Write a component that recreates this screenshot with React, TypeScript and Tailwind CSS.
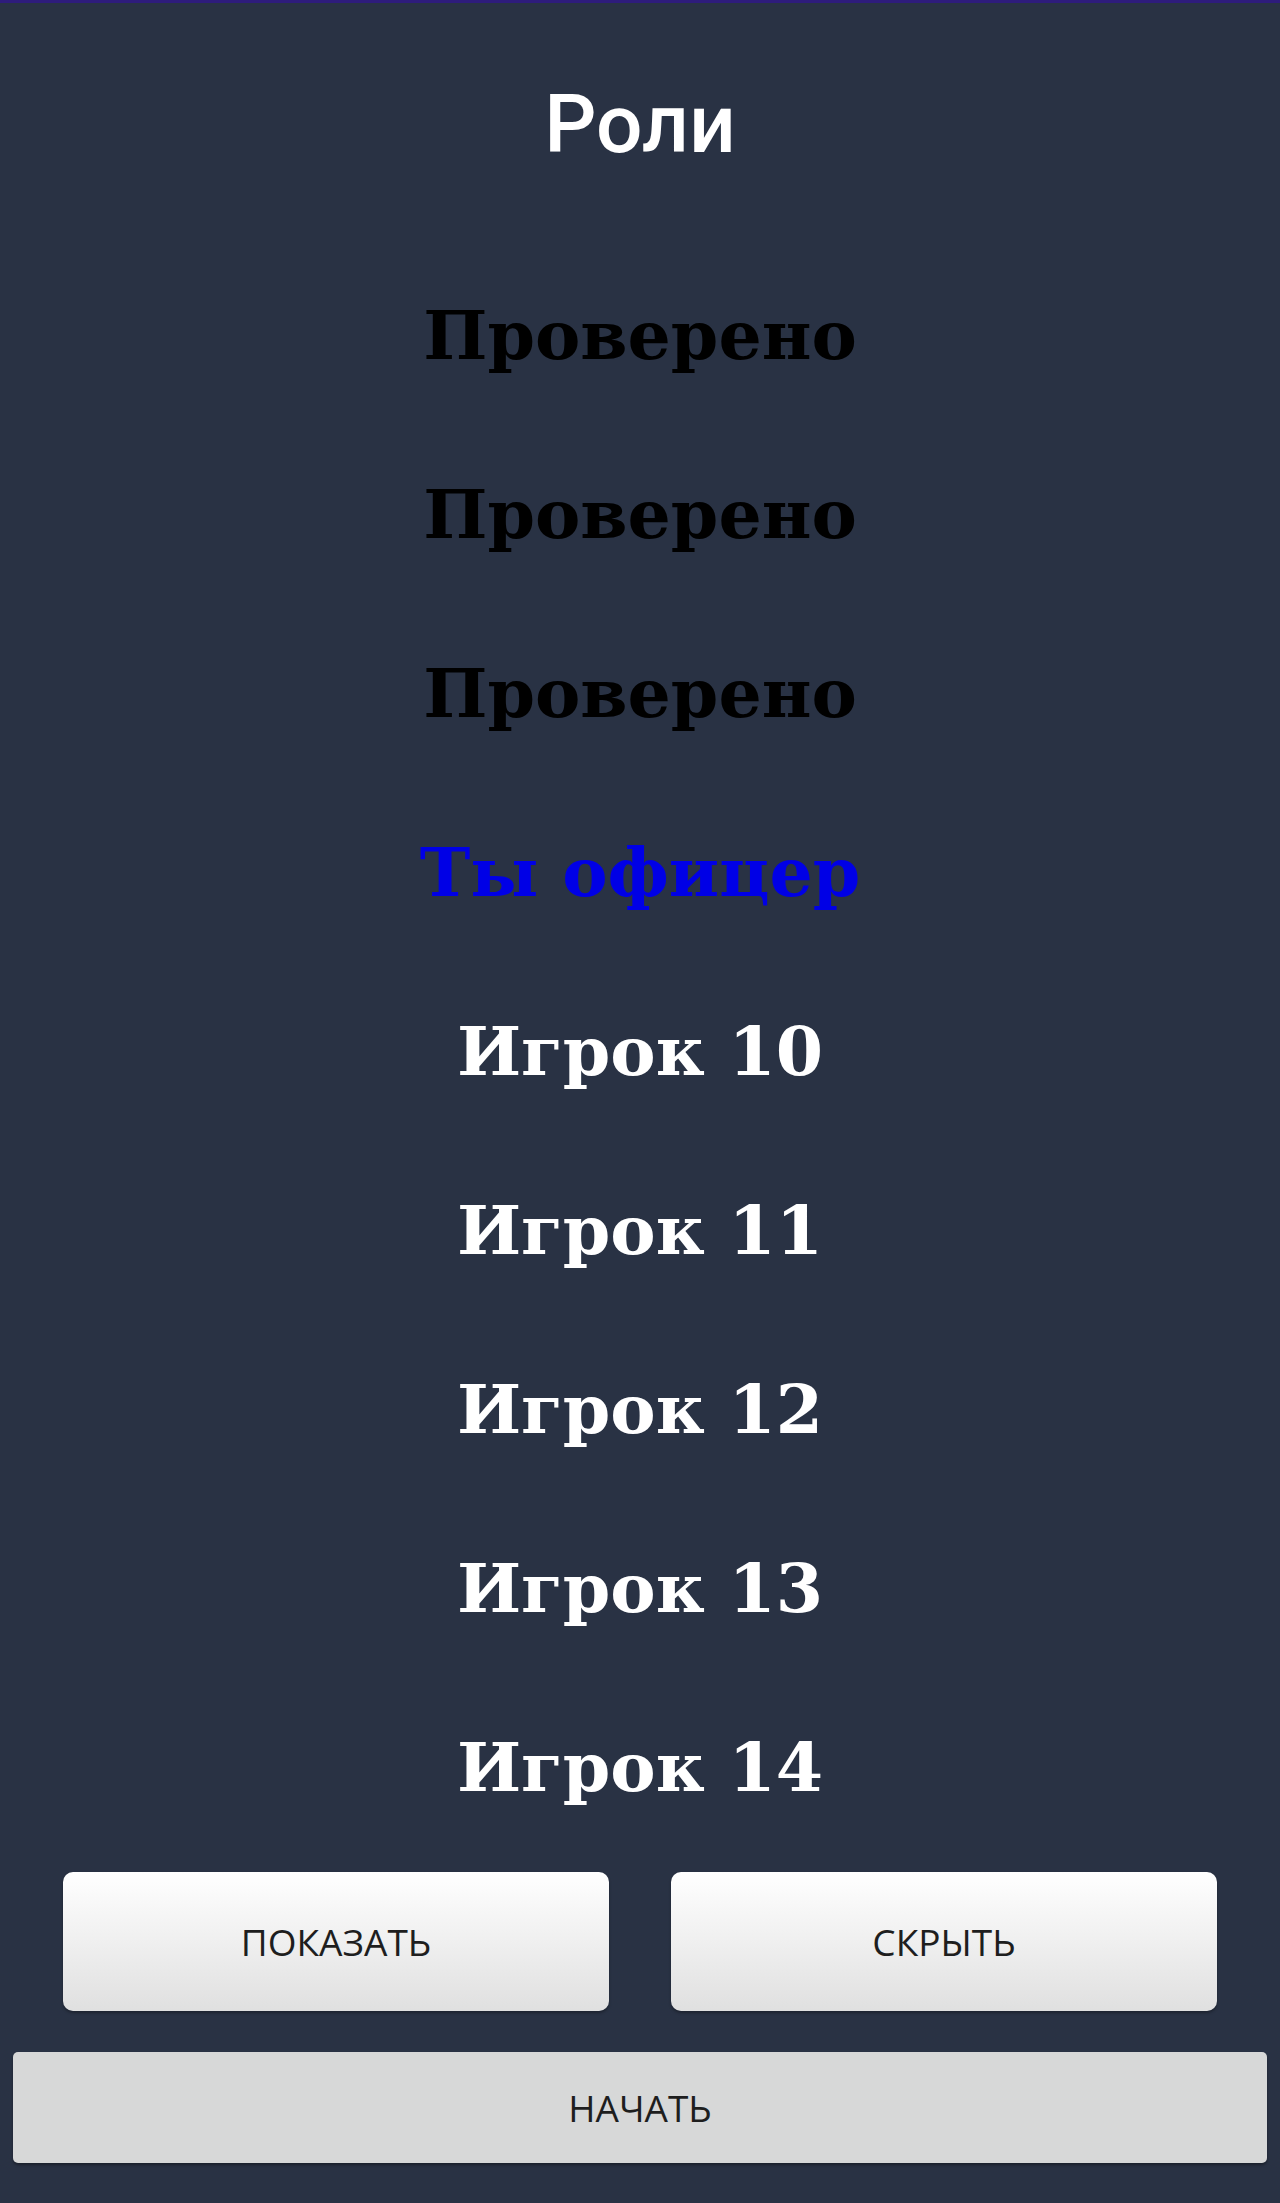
import React from 'react';

const rows: { label: string; tone: 'checked' | 'me' | 'player' }[] = [
  { label: 'Проверено', tone: 'checked' },
  { label: 'Проверено', tone: 'checked' },
  { label: 'Проверено', tone: 'checked' },
  { label: 'Ты офицер', tone: 'me' },
  { label: 'Игрок 10', tone: 'player' },
  { label: 'Игрок 11', tone: 'player' },
  { label: 'Игрок 12', tone: 'player' },
  { label: 'Игрок 13', tone: 'player' },
  { label: 'Игрок 14', tone: 'player' },
];

const toneClass = {
  checked: 'text-black',
  me: 'text-[#0000e6]',
  player: 'text-white',
};

export default function App() {
  return (
    <div className="flex min-h-[2203px] w-full flex-col border-t-[3px] border-[#2e1c7c] bg-[#293244]">
      {/* Title */}
      <h1 className="pt-[60px] text-center font-['Roboto',sans-serif] text-[82px] font-medium text-white">
        Роли
      </h1>

      {/* Roles list */}
      <ul className="mt-[59px] flex flex-col">
        {rows.map((row, i) => (
          <li
            key={i}
            className={`flex h-[179px] items-center justify-center font-['DejaVu_Serif',serif] text-[68px] font-bold ${toneClass[row.tone]}`}
          >
            {row.label}
          </li>
        ))}
      </ul>

      {/* Show / hide */}
      <div className="mt-[16px] flex gap-[62px] px-[63px]">
        <button className="h-[139px] flex-1 rounded-[10px] bg-gradient-to-b from-white to-[#e0e0e0] font-['Open_Sans',sans-serif] text-[37px] text-[#1e1e1e] shadow-[0_2px_3px_rgba(0,0,0,0.3)]">
          ПОКАЗАТЬ
        </button>
        <button className="h-[139px] flex-1 rounded-[10px] bg-gradient-to-b from-white to-[#e0e0e0] font-['Open_Sans',sans-serif] text-[37px] text-[#1e1e1e] shadow-[0_2px_3px_rgba(0,0,0,0.3)]">
          СКРЫТЬ
        </button>
      </div>

      {/* Start */}
      <div className="mt-[41px] px-[13px]">
        <button className="h-[111px] w-full rounded-[5px] bg-[#d7d8d8] font-['Open_Sans',sans-serif] text-[37px] text-[#1e1e1e] shadow-[0_2px_3px_rgba(0,0,0,0.35)]">
          НАЧАТЬ
        </button>
      </div>
    </div>
  );
}
